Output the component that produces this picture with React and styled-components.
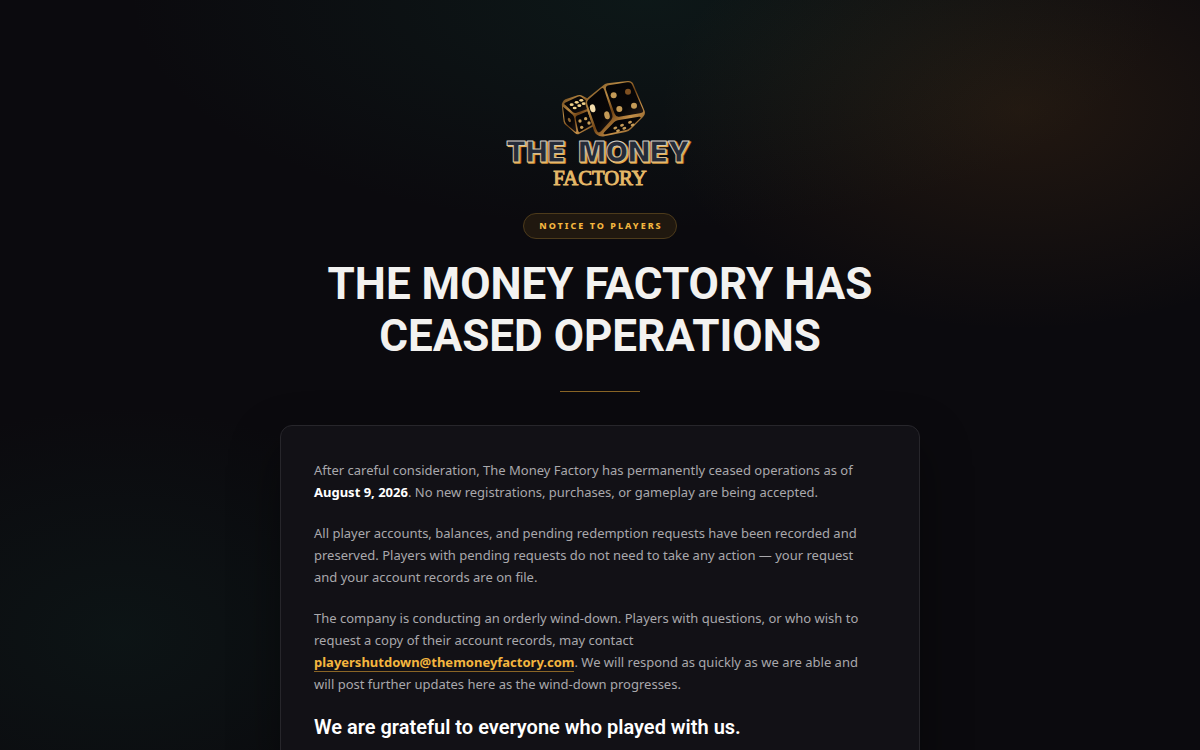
import React from "react";
import styled, { createGlobalStyle } from "styled-components";

const GlobalStyle = createGlobalStyle`
  * { box-sizing: border-box; }
  html { background: #0b0a0e; scrollbar-width: none; }
  body { margin: 0; }
`;

const sans = `"Noto Sans", "Open Sans", sans-serif`;
const display = `Roboto, "Open Sans", sans-serif`;

const Page = styled.div`
  min-height: 100vh;
  display: flex;
  flex-direction: column;
  align-items: center;
  padding: 78px 24px 64px;
  font-family: ${sans};
  color: #a9a8ac;
  background:
    radial-gradient(ellipse 360px 220px at 85% 110px, rgba(165, 100, 30, 0.15), transparent 100%),
    radial-gradient(ellipse 520px 230px at 54% 0, rgba(24, 100, 80, 0.15), transparent 100%),
    radial-gradient(ellipse 340px 230px at 10% 636px, rgba(24, 100, 80, 0.11), transparent 100%),
    #0b0a0e;
`;

const Logo = styled.svg`
  display: block;
  width: 200px;
  height: 112px;
`;

const Badge = styled.span`
  margin-top: 23px;
  height: 26px;
  padding: 0 13px 0 15px;
  display: flex;
  align-items: center;
  border: 1px solid #4d3b1b;
  border-radius: 13px;
  background: #20180f;
  color: #f4b63f;
  font-size: 9px;
  line-height: 14px;
  font-weight: 800;
  letter-spacing: 2px;
  text-transform: uppercase;
`;

const Title = styled.h1`
  max-width: 600px;
  margin: 19px 0 0;
  font-family: ${display};
  font-size: 44px;
  line-height: 52px;
  font-weight: 700;
  text-align: center;
  text-transform: uppercase;
  color: #f3f2f0;
`;

const Divider = styled.hr`
  width: 80px;
  height: 1px;
  margin: 29px 0 33px;
  border: 0;
  background: #8a6526;
`;

const Card = styled.main`
  width: 100%;
  max-width: 640px;
  padding: 33px;
  border: 1px solid #27262b;
  border-radius: 12px;
  background: #121116;
  box-shadow: 0 20px 50px rgba(0, 0, 0, 0.4);
`;

const Paragraph = styled.p`
  max-width: 560px;
  margin: 0 0 19px;
  font-size: 13px;
  line-height: 22px;
`;

const Strong = styled.strong`
  font-weight: 700;
  color: #ffffff;
`;

const MailLink = styled.a`
  font-weight: 700;
  color: #f4b63f;
  text-decoration: none;
  border-bottom: 1px solid #8a6526;
`;

const Closing = styled.h2`
  margin: 0;
  font-family: ${display};
  font-size: 20px;
  line-height: 26px;
  font-weight: 600;
  color: #ffffff;
`;

const pips = {
  small: [[215, 104], [230, 97], [244, 91], [224, 114], [238, 107], [251, 101]],
  front: [[240, 153], [257, 146], [245, 172], [267, 159]],
  under: [[346, 174], [366, 166], [390, 157], [354, 182], [373, 175], [398, 165]],
};

const wordLayers = [
  { offset: 5, fill: "#7c4317", stroke: "#7c4317", width: 4 },
  { offset: 3, fill: "#eab04f", stroke: "#eab04f", width: 3 },
  { offset: 0, fill: "#252b38", stroke: "url(#rim)", width: 3 },
];

function BrandLogo() {
  return (
    <Logo viewBox="0 24 600 336" role="img" aria-label="The Money Factory">
      <defs>
        <linearGradient id="edge" x1="0" y1="0" x2="1" y2="1">
          <stop offset="0" stopColor="#5e3a14" />
          <stop offset="0.3" stopColor="#b98a44" />
          <stop offset="0.5" stopColor="#6f4214" />
          <stop offset="0.7" stopColor="#c48f48" />
          <stop offset="1" stopColor="#5e3a14" />
        </linearGradient>
        <linearGradient id="face" x1="0" y1="0" x2="1" y2="1">
          <stop offset="0" stopColor="#050405" />
          <stop offset="0.65" stopColor="#080607" />
          <stop offset="1" stopColor="#241a16" />
        </linearGradient>
        <linearGradient id="rim" x1="0" y1="0" x2="0" y2="1">
          <stop offset="0" stopColor="#d9dade" />
          <stop offset="0.5" stopColor="#c8bca5" />
          <stop offset="1" stopColor="#efc173" />
        </linearGradient>
      </defs>

      <path d="M188 96 Q184 101 186 110 L191 155 Q192 161 198 166 L225 189 Q231 195 238 191 L282 168 L266 87 L247 77 Q240 73 233 76 L196 88 Q190 91 188 96Z" fill="url(#edge)" />
      <path d="M195 98 Q190 101 197 106 L218 126 Q223 130 230 128 L260 118 Q264 116 262 108 L257 91 L243 80 Q239 77 233 80Z" fill="url(#face)" />
      <path d="M189 110 L218 134 Q222 138 223 145 L229 182 Q229 188 224 184 L200 163 Q195 158 194 151Z" fill="url(#face)" />
      <path d="M230 137 L262 124 L278 164 L240 186 Q235 188 234 181 L227 146 Q226 140 230 137Z" fill="url(#face)" />
      <g fill="#f1d28b">
        {pips.small.map(([x, y]) => (
          <ellipse key={x} cx={x} cy={y} rx="6" ry="4" />
        ))}
      </g>
      <g fill="#c9a05a">
        {pips.front.map(([x, y]) => (
          <ellipse key={x} cx={x} cy={y} rx="5" ry="5" />
        ))}
        <ellipse cx="208" cy="150" rx="4" ry="7" fill="#8b6430" transform="rotate(-25 208 150)" />
      </g>

      <path d="M310 46 Q314 42 322 40 L383 33 Q397 32 401 44 L434 123 Q437 133 429 141 L393 177 Q386 184 377 186 L313 199 Q300 202 289 193 Q285 190 282 182 L257 105 Q254 92 265 82Z" fill="url(#edge)" />
      <path d="M326 46 L382 37 Q393 35 397 46 L429 120 Q432 128 420 130 L357 140 Q348 141 344 131 L318 59 Q315 48 326 46Z" fill="url(#face)" />
      <path d="M268 86 L303 56 Q310 51 313 61 L337 135 Q340 143 334 149 L303 184 Q294 192 290 180 L262 103 Q259 93 268 86Z" fill="url(#face)" />
      <path d="M353 151 L417 140 Q426 139 419 146 L390 174 Q384 179 375 181 L317 193 Q306 194 314 185 L342 157 Q347 152 353 151Z" fill="url(#face)" />
      <g fill="#c49a57">
        <ellipse cx="341" cy="76" rx="9" ry="9" />
        <ellipse cx="384" cy="65" rx="9" ry="9" fill="#805021" />
        <ellipse cx="358" cy="117" rx="9" ry="9" />
        <ellipse cx="402" cy="107" rx="9" ry="9" />
        <ellipse cx="278" cy="115" rx="8" ry="12" fill="#f4ddad" transform="rotate(-15 278 115)" />
        <ellipse cx="321" cy="136" rx="8" ry="12" transform="rotate(-15 321 136)" />
        {pips.under.map(([x, y]) => (
          <ellipse key={x} cx={x} cy={y} rx="6" ry="4" transform={`rotate(-20 ${x} ${y})`} />
        ))}
      </g>

      <g fontFamily="Inter, sans-serif" fontWeight="900" fontSize="86" textAnchor="middle" strokeLinejoin="round">
        {wordLayers.map(({ offset, fill, stroke, width }) => (
          <g key={offset} fill={fill} stroke={stroke} strokeWidth={width}>
            <text x={107 + offset} y={275 + offset}>THE</text>
            <text x={402 + offset} y={275 + offset}>MONEY</text>
          </g>
        ))}
      </g>
      <text x="300" y="344" fontFamily="Liberation Serif, serif" fontSize="62" textAnchor="middle" fill="#e5b868" stroke="#e5b868" strokeWidth="3">
        FACTORY
      </text>
    </Logo>
  );
}

export default function App() {
  return (
    <>
      <GlobalStyle />
      <Page>
        <BrandLogo />
        <Badge>Notice to Players</Badge>
        <Title>The Money Factory has ceased operations</Title>
        <Divider />
        <Card>
          <Paragraph>
            After careful consideration, The Money Factory has permanently ceased operations as of{" "}
            <Strong>August 9, 2026</Strong>. No new registrations, purchases, or gameplay are being accepted.
          </Paragraph>
          <Paragraph>
            All player accounts, balances, and pending redemption requests have been recorded and preserved.
            Players with pending requests do not need to take any action — your request and your account
            records are on file.
          </Paragraph>
          <Paragraph>
            The company is conducting an orderly wind-down. Players with questions, or who wish to request a
            copy of their account records, may contact{" "}
            <MailLink href="mailto:playershutdown@themoneyfactory.com">playershutdown@themoneyfactory.com</MailLink>.
            We will respond as quickly as we are able and will post further updates here as the wind-down
            progresses.
          </Paragraph>
          <Closing>We are grateful to everyone who played with us.</Closing>
        </Card>
      </Page>
    </>
  );
}
